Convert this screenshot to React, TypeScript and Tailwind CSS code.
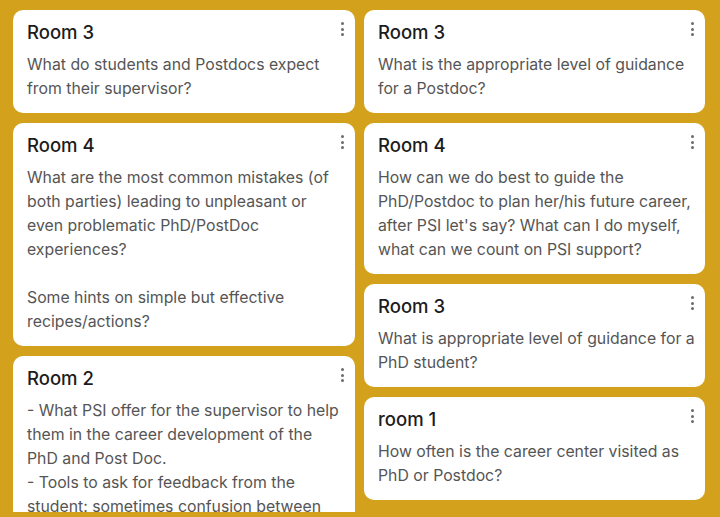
const left = [
  {
    title: 'Room 3',
    body: ['What do students and Postdocs expect from their supervisor?'],
  },
  {
    title: 'Room 4',
    body: [
      'What are the most common mistakes (of both parties) leading to unpleasant or even problematic PhD/PostDoc experiences?',
      '',
      'Some hints on simple but effective recipes/actions?',
    ],
  },
  {
    title: 'Room 2',
    body: [
      '- What PSI offer for the supervisor to help them in the career development of the PhD and Post Doc.',
      '- Tools to ask for feedback from the student: sometimes confusion between what the supervisor thinks and what the student needs.',
    ],
  },
];

const right = [
  {
    title: 'Room 3',
    body: ['What is the appropriate level of guidance for a Postdoc?'],
  },
  {
    title: 'Room 4',
    body: [
      "How can we do best to guide the PhD/Postdoc to plan her/his future career, after PSI let's say? What can I do myself, what can we count on PSI support?",
    ],
  },
  {
    title: 'Room 3',
    body: ['What is appropriate level of guidance for a PhD student?'],
  },
  {
    title: 'room 1',
    body: ['How often is the career center visited as PhD or Postdoc?'],
  },
];

// 三個點的選單圖示
function Kebab() {
  return (
    <div className="absolute right-[11px] top-[10px] flex flex-col items-center gap-[2.5px] py-[2px]">
      <span className="block h-[3px] w-[3px] rounded-full bg-[#6b6b6b]" />
      <span className="block h-[3px] w-[3px] rounded-full bg-[#6b6b6b]" />
      <span className="block h-[3px] w-[3px] rounded-full bg-[#6b6b6b]" />
    </div>
  );
}

function Card({ title, body, wide }: { title: string; body: string[]; wide?: boolean }) {
  return (
    <div
      className={
        wide
          ? 'relative shrink-0 rounded-[10px] bg-white pl-[14px] pr-[6px] pb-[12px] pt-[9px]'
          : 'relative shrink-0 rounded-[10px] bg-white pl-[14px] pr-[12px] pb-[12px] pt-[9px]'
      }
    >
      <Kebab />
      <div className="text-[18.5px] font-medium leading-[26px] text-[#1c1c1c]">{title}</div>
      <div className="mt-[8px] text-[15.8px] leading-[24px] text-[#555555]">
        {body.map((line, i) => (
          <p key={i} className="min-h-[24px]">
            {line}
          </p>
        ))}
      </div>
    </div>
  );
}

export default function App() {
  return (
    <div
      className="h-[517px] w-[720px] overflow-hidden bg-[#d3a11b] pb-[5px] pt-[10px] pl-[13px] pr-[15px]"
      style={{ fontFamily: 'Inter, "Noto Sans", sans-serif' }}
    >
      <div className="flex h-full gap-[9px] overflow-hidden">
        <div className="flex w-[342px] flex-col gap-[10px]">
          {left.map((c, i) => (
            <Card key={i} {...c} />
          ))}
        </div>
        <div className="flex w-[341px] flex-col gap-[10px]">
          {right.map((c, i) => (
            <Card key={i} {...c} wide />
          ))}
        </div>
      </div>
    </div>
  );
}
